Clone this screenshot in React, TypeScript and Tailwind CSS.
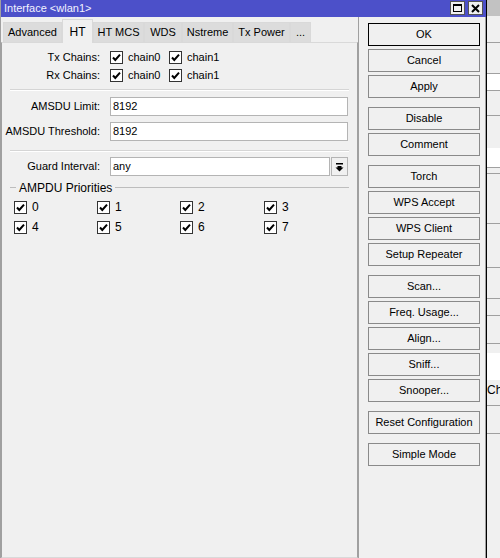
import React from 'react';

const FONT = { fontFamily: '"Liberation Sans", Arial, sans-serif' };

const tabs = [
  { name: 'Advanced', w: 'w-[59px]' },
  { name: 'HT', w: 'w-[31px]', active: true },
  { name: 'HT MCS', w: 'w-[51px]' },
  { name: 'WDS', w: 'w-[38px]' },
  { name: 'Nstreme', w: 'w-[51px]' },
  { name: 'Tx Power', w: 'w-[57px]' },
  { name: '...', w: 'w-[21px]' },
];

const buttonGroups = [
  ['OK', 'Cancel', 'Apply'],
  ['Disable', 'Comment'],
  ['Torch', 'WPS Accept', 'WPS Client', 'Setup Repeater'],
  ['Scan...', 'Freq. Usage...', 'Align...', 'Sniff...', 'Snooper...'],
  ['Reset Configuration'],
  ['Simple Mode'],
];

// stripes of the window lying behind, seen at the right edge
const stripes = [
  { h: 'h-[16px]', c: 'bg-[#c2c2c2]' },
  { h: 'h-[27px]', c: 'border-b border-[#a0a0a0]' },
  { h: 'h-[31px]', c: 'border-b border-[#a0a0a0]' },
  { h: 'h-[17px]', c: 'bg-white border-b border-[#a0a0a0]' },
  { h: 'h-[25px]', c: 'border-b border-[#a0a0a0]' },
  { h: 'h-[32px]', c: '' },
  { h: 'h-[20px]', c: 'bg-white border-b border-[#a0a0a0]' },
  { h: 'h-[6px]', c: 'border-b border-[#a0a0a0]' },
  { h: 'h-[50px]', c: 'border-b border-[#a0a0a0]' },
  { h: 'h-[44px]', c: 'border-b border-[#a0a0a0]' },
  { h: 'h-[31px]', c: 'border-b border-[#a0a0a0]' },
  { h: 'h-[17px]', c: 'border-b border-[#a0a0a0]' },
  { h: 'h-[28px]', c: 'border-b border-[#a0a0a0]' },
  { h: 'h-[9px]', c: '' },
  { h: 'h-[27px]', c: 'bg-white' },
];

function Check({ label }: { label: string }) {
  return (
    <div className="flex items-center gap-[5px]">
      <span className="w-[13px] h-[13px] border border-[#333] bg-white flex items-center justify-center">
        <svg width="11" height="11" viewBox="0 0 11 11">
          <path d="M2 5.5 L4.3 8 L9 2.6" fill="none" stroke="#000" strokeWidth="2" />
        </svg>
      </span>
      <span>{label}</span>
    </div>
  );
}

function Row({ label, children, className = '' }: { label: string; children: React.ReactNode; className?: string }) {
  return (
    <div className={`flex items-center ${className}`}>
      <div className="w-[98px] text-right shrink-0 whitespace-nowrap">{label}</div>
      <div className="pl-[10px] flex-1 flex items-center">{children}</div>
    </div>
  );
}

function Sep({ className = '' }: { className?: string }) {
  return <div className={`mx-[8px] border-t border-[#d5d5d5] border-b border-b-white ${className}`} />;
}

export default function App() {
  return (
    <div className="w-[500px] h-[558px] flex overflow-hidden bg-[#f0f0f0] text-[11px] text-black" style={FONT}>
      {/* window */}
      <div className="w-[487px] h-full flex flex-col border-l border-l-[#a0a0a0] border-r border-r-black shrink-0">
        <div className="h-[17px] bg-[#4c50c9] flex items-center justify-between pl-[3px] pr-[3px]">
          <span className="text-[11px] text-[#f2f2ff] leading-none">Interface &lt;wlan1&gt;</span>
          <div className="flex gap-[3px] self-start pt-[1px]">
            <span className="w-[15px] h-[14px] bg-[#f0f0f0] border border-[#555] flex items-center justify-center">
              <span className="w-[9px] h-[8px] border border-black border-t-2" />
            </span>
            <span className="w-[15px] h-[14px] bg-[#f0f0f0] border border-[#555] flex items-center justify-center">
              <svg width="9" height="9" viewBox="0 0 9 9">
                <path d="M1 1 L8 8 M8 1 L1 8" stroke="#000" strokeWidth="2" />
              </svg>
            </span>
          </div>
        </div>

        <div className="flex-1 flex">
          {/* left: tabs + pane */}
          <div className="w-[357px] flex flex-col">
            <div className="flex items-end h-[25px] pl-[2px]">
              {tabs.map((t) =>
                t.active ? (
                  <div
                    key={t.name}
                    className={`${t.w} h-[24px] -mb-px bg-[#f0f0f0] border border-[#d9d9d9] border-b-0 flex items-center justify-center z-10 text-[12px]`}
                  >
                    {t.name}
                  </div>
                ) : (
                  <div
                    key={t.name}
                    className={`${t.w} h-[20px] bg-[#dcdcdc] border border-[#d9d9d9] border-b-0 flex items-center justify-center`}
                  >
                    {t.name}
                  </div>
                )
              )}
            </div>
            <div className="flex-1 border border-[#d9d9d9] border-r-[#a0a0a0] border-l-[#a0a0a0] bg-[#f0f0f0] pt-[5px]">
              <Row label="Tx Chains:" className="h-[18px]">
                <div className="w-[59px]"><Check label="chain0" /></div>
                <Check label="chain1" />
              </Row>
              <Row label="Rx Chains:" className="h-[18px]">
                <div className="w-[59px]"><Check label="chain0" /></div>
                <Check label="chain1" />
              </Row>
              <Sep className="mt-[5px]" />
              <Row label="AMSDU Limit:" className="mt-[6px] h-[19px]">
                <div className="w-[238px] h-[19px] bg-white border border-[#b4b4b4] pl-[2px] flex items-center">8192</div>
              </Row>
              <Row label="AMSDU Threshold:" className="mt-[6px] h-[19px]">
                <div className="w-[238px] h-[19px] bg-white border border-[#b4b4b4] pl-[2px] flex items-center">8192</div>
              </Row>
              <Sep className="mt-[9px]" />
              <Row label="Guard Interval:" className="mt-[5px] h-[19px]">
                <div className="w-[220px] h-[19px] bg-white border border-[#b4b4b4] pl-[2px] flex items-center">any</div>
                <div className="ml-[1px] w-[17px] h-[19px] border border-[#b4b4b4] bg-[#f0f0f0] flex items-center justify-center">
                  <svg width="9" height="10" viewBox="0 0 9 10">
                    <rect x="1" y="1" width="7" height="1.5" fill="#000" />
                    <path d="M2.5 4 H6.5 V5.5 H8.5 L4.5 9.5 L0.5 5.5 H2.5 Z" fill="#000" />
                  </svg>
                </div>
              </Row>
              <div className="mt-[4px] flex items-center h-[15px] px-[8px]">
                <div className="w-[6px] border-t border-[#bdbdbd]" />
                <span className="px-[3px] text-[12px]">AMPDU Priorities</span>
                <div className="flex-1 border-t border-[#bdbdbd]" />
              </div>
              <div className="mt-[3px] pl-[12px] grid grid-cols-[83px_83px_84px_83px] gap-y-[2px]">
                {['0', '1', '2', '3', '4', '5', '6', '7'].map((n) => (
                  <div key={n} className="h-[18px] flex items-center text-[12px]">
                    <Check label={n} />
                  </div>
                ))}
              </div>
            </div>
          </div>

          {/* right: buttons */}
          <div className="flex-1 border-l border-[#a0a0a0] border-r border-r-[#a0a0a0] pl-[9px] pr-[5px] pt-[6px] flex flex-col gap-[9px]">
            {buttonGroups.map((g, gi) => (
              <div key={gi} className="flex flex-col gap-[3px]">
                {g.map((b) => (
                  <div
                    key={b}
                    className={`h-[23px] flex items-center justify-center bg-[#f0f0f0] border whitespace-nowrap ${
                      b === 'OK' ? 'border-black' : 'border-[#8a8a8a]'
                    }`}
                  >
                    {b}
                  </div>
                ))}
              </div>
            ))}
          </div>
        </div>
      </div>

      {/* background window strip */}
      <div className="flex-1 h-full flex flex-col overflow-hidden">
        {stripes.map((s, i) => (
          <div key={i} className={`${s.h} ${s.c}`} />
        ))}
        <div className="h-[20px] flex items-center text-[12px] whitespace-nowrap">Che</div>
        <div className="h-[6px] border-b border-[#a0a0a0]" />
        <div className="h-[28px] border-b border-[#a0a0a0]" />
      </div>
    </div>
  );
}
